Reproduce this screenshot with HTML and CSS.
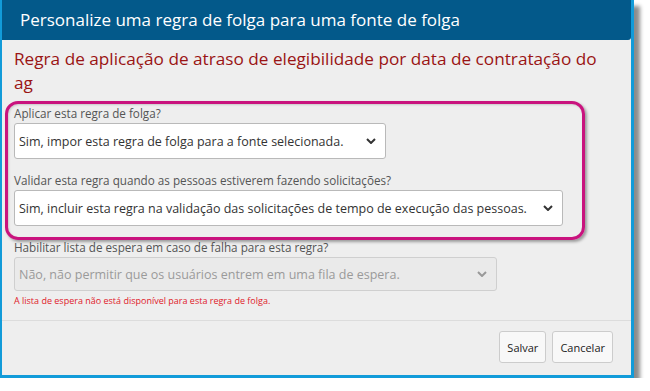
FILE: index.html
```html
<!DOCTYPE html>
<html lang="pt">
<head>
<meta charset="utf-8">
<link rel="stylesheet" href="styles.css">
</head>
<body>
<div class="dialog">
  <div class="header">Personalize uma regra de folga para uma fonte de folga</div>
  <div class="body">
    <h2 class="rule-title">Regra de aplicação de atraso de elegibilidade por data de contratação do ag</h2>
    <div class="field">
      <label class="label">Aplicar esta regra de folga?</label>
      <div class="select w1"><span>Sim, impor esta regra de folga para a fonte selecionada.</span><svg class="chev" width="10" height="6" viewBox="0 0 10 6"><path d="M1 1 L5 5 L9 1" fill="none" stroke="#333" stroke-width="2"/></svg></div>
    </div>
    <div class="field">
      <label class="label">Validar esta regra quando as pessoas estiverem fazendo solicitações?</label>
      <div class="select w2"><span>Sim, incluir esta regra na validação das solicitações de tempo de execução das pessoas.</span><svg class="chev" width="10" height="6" viewBox="0 0 10 6"><path d="M1 1 L5 5 L9 1" fill="none" stroke="#333" stroke-width="2"/></svg></div>
    </div>
    <div class="field last">
      <label class="label">Habilitar lista de espera em caso de falha para esta regra?</label>
      <div class="select w3 disabled"><span>Não, não permitir que os usuários entrem em uma fila de espera.</span><svg class="chev" width="10" height="6" viewBox="0 0 10 6"><path d="M1 1 L5 5 L9 1" fill="none" stroke="#999" stroke-width="2"/></svg></div>
      <div class="error">A lista de espera não está disponível para esta regra de folga.</div>
    </div>
    <div class="highlight"></div>
  </div>
  <div class="footer">
    <button class="btn">Salvar</button>
    <button class="btn">Cancelar</button>
  </div>
</div>
</body>
</html>
```

FILE: styles.css
```css
html, body {
  margin: 0;
  padding: 0;
  background: #ffffff;
}
body {
  font-family: "Open Sans", "Noto Sans", sans-serif;
}
.dialog {
  position: relative;
  width: 629px;
  background: #eeeeee;
  border-left: 2px solid #129bd9;
  border-right: 3px solid #129bd9;
  border-bottom: 3px solid #129bd9;
  box-shadow: 6px 6px 4px rgba(0, 0, 0, 0.45);
}
.header {
  height: 40px;
  background: #03598a;
  color: #ffffff;
  font-size: 17px;
  line-height: 40px;
  padding-left: 18px;
  border-bottom-right-radius: 3px;
}
.body {
  position: relative;
  padding: 7px 12px 0 12px;
  border-bottom: 1px solid #dcdcdc;
}
.rule-title {
  width: 588px;
  margin: 0 0 10px 0;
  font-weight: normal;
  font-size: 17.2px;
  line-height: 24px;
  color: #9a1414;
}
.field {
  display: flex;
  flex-direction: column;
  align-items: flex-start;
  margin-bottom: 13px;
}
.field.last {
  margin-bottom: 13px;
}
.label {
  font-size: 11.7px;
  line-height: 16px;
  color: #555555;
  margin-bottom: 2px;
}
.select {
  box-sizing: border-box;
  height: 36px;
  display: flex;
  align-items: center;
  justify-content: space-between;
  padding: 0 9px 0 4px;
  background: #ffffff;
  border: 1px solid #b9b9b9;
  border-radius: 3px;
  font-size: 12.5px;
  color: #333333;
  white-space: nowrap;
}
.w1 { width: 372px; }
.w2 { width: 549px; }
.w3 { width: 483px; height: 34px; }
.select.disabled {
  background: #eaeaea;
  border-color: #cfcfcf;
  color: #9a9a9a;
}
.error {
  margin-top: 3px;
  font-size: 9px;
  color: #e0202a;
}
.highlight {
  position: absolute;
  left: 3px;
  top: 61px;
  width: 574px;
  height: 133px;
  border: 3px solid #c9137e;
  border-radius: 13px;
  box-shadow: 2px 2px 3px rgba(0, 0, 0, 0.35), inset 1px 1px 2px rgba(0,0,0,0.15);
  pointer-events: none;
}
.footer {
  display: flex;
  justify-content: flex-end;
  gap: 6px;
  padding: 10px 18px 12px 0;
}
.btn {
  height: 32px;
  padding: 0 7px;
  background: #f8f8f8;
  border: 1px solid #cccccc;
  border-radius: 3px;
  font-family: "Open Sans", "Noto Sans", sans-serif;
  font-size: 11px;
  color: #222222;
}
```
